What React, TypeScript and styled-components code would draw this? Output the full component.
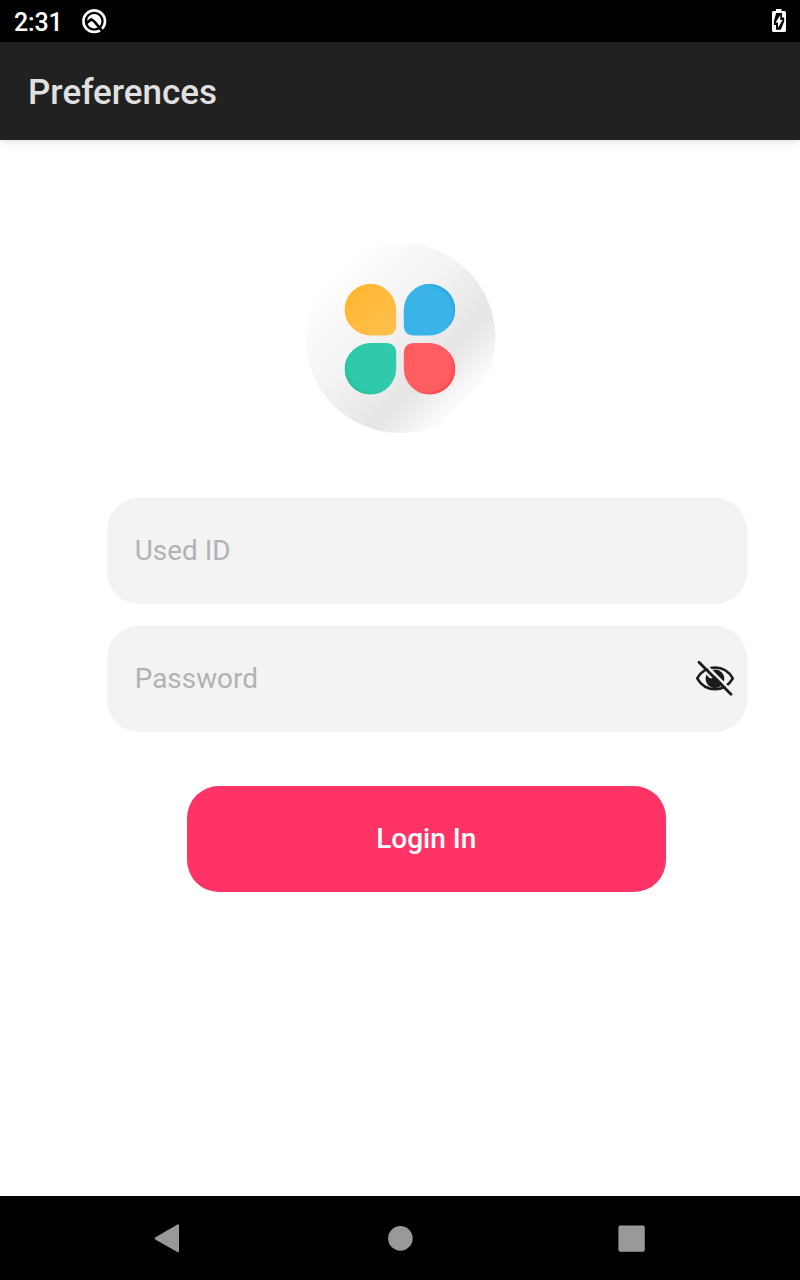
import React from "react";
import styled, { createGlobalStyle } from "styled-components";

const GlobalStyle = createGlobalStyle`
  *, *::before, *::after { box-sizing: border-box; }
  body { margin: 0; background: #fff; font-family: Roboto, sans-serif; }
`;

const Screen = styled.div`
  width: 800px;
  height: 1280px;
  display: flex;
  flex-direction: column;
  overflow: hidden;
  background: #fff;
`;

const StatusBar = styled.header`
  height: 42px;
  padding: 0 14px 0 14px;
  display: flex;
  align-items: center;
  background: #000;
  color: #fff;
`;

const Clock = styled.span`
  width: 67px;
  padding-top: 3px;
  font-size: 25px;
  letter-spacing: -0.2px;
  line-height: 30px;
  font-weight: 500;
`;

const BatterySlot = styled.div`
  display: flex;
  margin-left: auto;
`;

const AppBar = styled.div`
  height: 98px;
  flex: none;
  padding: 4px 28px 0;
  display: flex;
  align-items: center;
  background: #212121;
  box-shadow: 0 2px 7px rgba(0, 0, 0, 0.13);
`;

const Title = styled.h1`
  margin: 0;
  font-size: 35px;
  line-height: 42px;
  font-weight: 500;
  color: #e0e0e0;
`;

const Content = styled.main`
  flex: 1;
  display: flex;
  flex-direction: column;
  align-items: center;
  padding-top: 98px;
`;

const LoginForm = styled.form`
  width: 640px;
  margin: 59.5px 0 0 53.5px;
  display: flex;
  flex-direction: column;
  align-items: center;
`;

const Field = styled.label`
  width: 100%;
  height: 106.5px;
  margin-bottom: 21.5px;
  padding: 0 12px 0 28px;
  display: flex;
  align-items: center;
  border-radius: 32px;
  background: #f3f3f3;
`;

const FieldInput = styled.input`
  flex: 1;
  min-width: 0;
  padding: 0;
  border: 0;
  outline: 0;
  background: transparent;
  font: 400 27.9px/34px Roboto, sans-serif;
  color: #212121;
  &::placeholder { color: #b2b2b2; opacity: 1; }
`;

const LoginButton = styled.button`
  width: 479px;
  height: 106.5px;
  margin: 32px 1px 0 0;
  padding: 0;
  border: 0;
  border-radius: 32px;
  background: #ff3366;
  color: #fff;
  font: 500 28px/34px Roboto, sans-serif;
`;

const NavBar = styled.nav`
  height: 84px;
  flex: none;
  display: grid;
  grid-template-columns: repeat(3, 232px);
  justify-content: center;
  place-items: center;
  background: #000;
`;

const Icon = styled.svg`
  display: block;
  flex: none;
`;

const PETAL = "M26 0A26 26 0 0 0 0 26A26 26 0 0 0 26 51.5H41Q51.5 51.5 51.5 41V26A26 26 0 0 0 26 0Z";

const petals = [
  { id: "yellow", from: "#ffb52f", to: "#ffc04c", shade: "#ffb52f", transform: "translate(44.7 46)" },
  { id: "blue", from: "#3ab4e8", to: "#3ab4e8", shade: "#28a9de", transform: "translate(155.3 46) scale(-1 1)" },
  { id: "green", from: "#2fcaab", to: "#2fcaab", shade: "#27bf9d", transform: "translate(44.7 156.5) scale(1 -1)" },
  { id: "red", from: "#ff5d62", to: "#ff5d62", shade: "#ff484e", transform: "translate(155.3 156.5) scale(-1 -1)" },
];

function Logo() {
  return (
    <Icon width="200" height="200" viewBox="0 0 200 200" aria-label="Logo">
      <defs>
        <linearGradient id="disc" gradientUnits="userSpaceOnUse" x1="33" y1="33" x2="166" y2="166">
          <stop offset="0" stopColor="#ffffff" />
          <stop offset="0.4" stopColor="#f3f3f3" />
          <stop offset="0.7" stopColor="#e7e7e7" />
          <stop offset="0.76" stopColor="#e6e6e6" />
          <stop offset="1" stopColor="#ffffff" />
        </linearGradient>
        {petals.map((p) => (
          <React.Fragment key={p.id}>
            <linearGradient id={`fill-${p.id}`} x1="0" y1="0" x2="1" y2="1">
              <stop offset="0" stopColor={p.from} />
              <stop offset="1" stopColor={p.to} />
            </linearGradient>
            <radialGradient id={`shade-${p.id}`} gradientUnits="userSpaceOnUse" cx="29" cy="28" r="31">
              <stop offset="0.8" stopColor={p.shade} stopOpacity="0" />
              <stop offset="0.94" stopColor={p.shade} />
            </radialGradient>
            <clipPath id={`edge-${p.id}`}>
              <path d="M0 0H48L0 48Z" />
            </clipPath>
          </React.Fragment>
        ))}
      </defs>
      <circle cx="100.5" cy="100" r="95" fill="url(#disc)" />
      {petals.map((p) => (
        <g key={p.id} transform={p.transform}>
          <path d={PETAL} fill={`url(#fill-${p.id})`} />
          <g clipPath={`url(#edge-${p.id})`}>
            <path d={PETAL} fill={`url(#shade-${p.id})`} />
          </g>
        </g>
      ))}
    </Icon>
  );
}

function NotificationIcon() {
  return (
    <Icon width="26" height="26" viewBox="0 0 26 26">
      <circle cx="13.2" cy="13.2" r="10.8" fill="none" stroke="#fff" strokeWidth="2.6" />
      <circle cx="13.2" cy="13.2" r="7.2" fill="#fff" />
      <path d="M5 15.4L10.2 11.4L13 13.2L20.5 22" fill="none" stroke="#000" strokeWidth="2.6" />
      <path d="M19 20.5L22.2 24" stroke="#000" strokeWidth="2.4" />
    </Icon>
  );
}

function BatteryIcon() {
  return (
    <Icon width="14" height="24" viewBox="0 0 14 24">
      <path d="M4 0H9.5V2H12.5Q14 2 14 3.5V21.5Q14 23 12.5 23H1.5Q0 23 0 21.5V3.5Q0 2 1.5 2H4Z" fill="#fff" />
      <path d="M4.2 4H10V8.6H12.2V12.2L8.8 20.8H4V16H1.9V12.2Z" fill="#000" />
      <path d="M8.3 6V11H10.7L6 18.7V13.6H3.6Z" fill="#fff" />
    </Icon>
  );
}

function HiddenEyeIcon() {
  return (
    <Icon width="40" height="40" viewBox="0 0 40 40">
      <path d="M2.2 19.3C10.5 4.8 29.5 4.8 37.8 19.3C29.5 33.8 10.5 33.8 2.2 19.3Z" fill="none" stroke="#1c1a1c" strokeWidth="2.6" strokeLinejoin="round" />
      <path d="M20 10.4A9.3 9.3 0 1 1 11.8 15.2A4.7 4.7 0 0 0 18.7 18.6C21 16 18.4 13 17 11.2Q18.4 10.4 20 10.4Z" fill="#1c1a1c" />
      <path d="M6.5 1.7L39 34.7" stroke="#f3f3f3" strokeWidth="2.5" />
      <path d="M4 3.2L36 35.3" stroke="#1c1a1c" strokeWidth="2.8" strokeLinecap="round" />
    </Icon>
  );
}

export default function App() {
  return (
    <>
      <GlobalStyle />
      <Screen>
        <StatusBar>
          <Clock>2:31</Clock>
          <NotificationIcon />
          <BatterySlot><BatteryIcon /></BatterySlot>
        </StatusBar>
        <AppBar>
          <Title>Preferences</Title>
        </AppBar>
        <Content>
          <Logo />
          <LoginForm onSubmit={(e) => e.preventDefault()}>
            <Field>
              <FieldInput type="text" placeholder="Used ID" />
            </Field>
            <Field>
              <FieldInput type="password" placeholder="Password" />
              <HiddenEyeIcon />
            </Field>
            <LoginButton type="submit">Login In</LoginButton>
          </LoginForm>
        </Content>
        <NavBar>
          <Icon width="30" height="30" viewBox="0 0 30 30">
            <path d="M2.6 14.3L24.4 1.5Q26 0.8 26 2.5V28Q26 29.7 24.4 29L2.6 16.7Q0.8 15.5 2.6 14.3Z" fill="#999" />
          </Icon>
          <Icon width="26" height="26" viewBox="0 0 26 26">
            <circle cx="13.4" cy="13.4" r="12.3" fill="#999" />
          </Icon>
          <Icon width="28" height="28" viewBox="0 0 28 28">
            <rect x="0.4" y="1.4" width="26.4" height="26.4" rx="2" fill="#999" />
          </Icon>
        </NavBar>
      </Screen>
    </>
  );
}
